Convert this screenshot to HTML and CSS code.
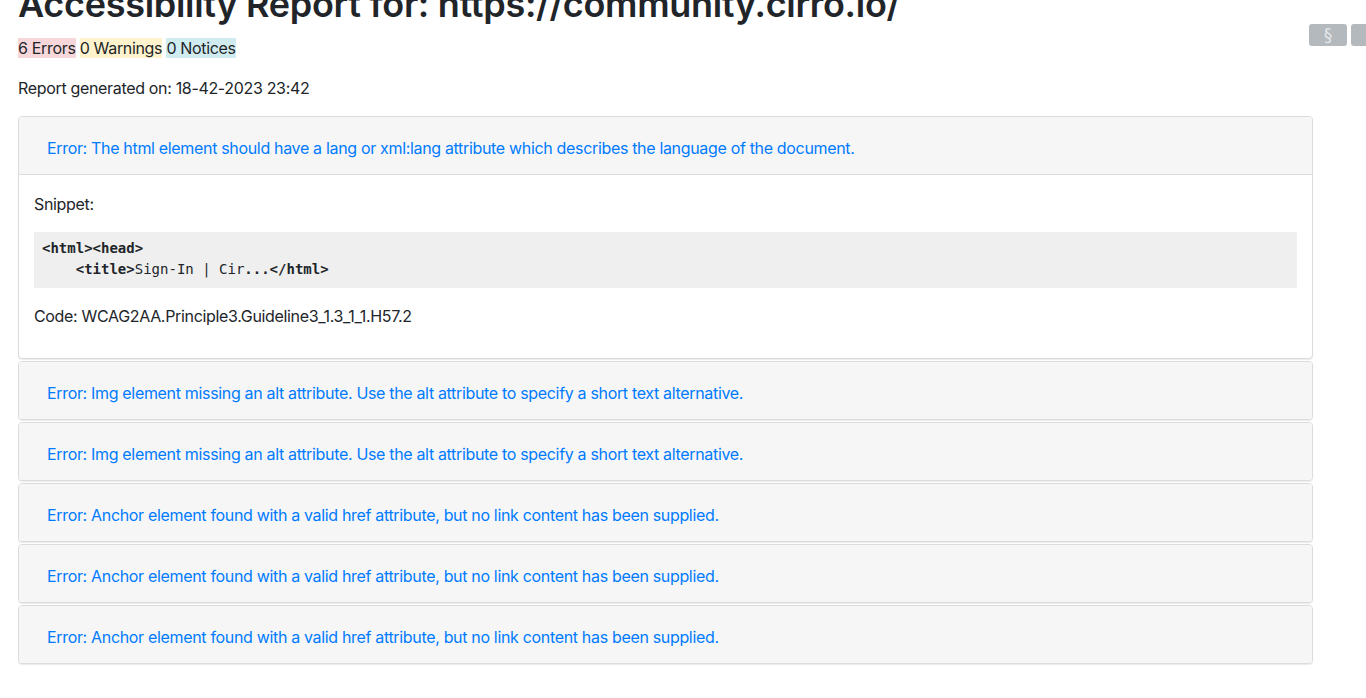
FILE: index.html
```html
<!DOCTYPE html>
<html lang="en">
<head>
<meta charset="utf-8">
<title>Accessibility Report</title>
<link rel="stylesheet" href="styles.css">
</head>
<body>
<div class="tools">
  <button class="tool-btn">§</button>
  <button class="tool-btn">‹</button>
</div>
<main class="report">
  <h1 class="title">Accessibility Report for: https://community.cirro.io/</h1>
  <p class="counts"><span class="count count-error">6 Errors</span> <span class="count count-warning">0 Warnings</span> <span class="count count-notice">0 Notices</span></p>
  <p class="generated">Report generated on: 18-42-2023 23:42</p>

  <div class="issues">
    <section class="issue open">
      <div class="issue-head"><button class="issue-link">Error: The html element should have a lang or xml:lang attribute which describes the language of the document.</button></div>
      <div class="issue-body">
        <p class="label">Snippet:</p>
        <pre class="snippet"><b>&lt;html&gt;&lt;head&gt;</b>
    <b>&lt;title&gt;</b>Sign-In | Cir<b>...&lt;/html&gt;</b></pre>
        <p class="label">Code: WCAG2AA.Principle3.Guideline3_1.3_1_1.H57.2</p>
      </div>
    </section>
    <section class="issue">
      <div class="issue-head"><button class="issue-link">Error: Img element missing an alt attribute. Use the alt attribute to specify a short text alternative.</button></div>
    </section>
    <section class="issue">
      <div class="issue-head"><button class="issue-link">Error: Img element missing an alt attribute. Use the alt attribute to specify a short text alternative.</button></div>
    </section>
    <section class="issue">
      <div class="issue-head"><button class="issue-link">Error: Anchor element found with a valid href attribute, but no link content has been supplied.</button></div>
    </section>
    <section class="issue">
      <div class="issue-head"><button class="issue-link">Error: Anchor element found with a valid href attribute, but no link content has been supplied.</button></div>
    </section>
    <section class="issue">
      <div class="issue-head"><button class="issue-link">Error: Anchor element found with a valid href attribute, but no link content has been supplied.</button></div>
    </section>
  </div>
</main>
</body>
</html>
```

FILE: styles.css
```css
* { box-sizing: border-box; }
html, body { margin: 0; padding: 0; }
body {
  font-family: Inter, "Liberation Sans", Arial, sans-serif;
  font-size: 16px;
  line-height: 1.5;
  letter-spacing: -0.33px;
  color: #212529;
  background: #fff;
  overflow: hidden;
}
.report {
  padding: 0 53px 40px 18px;
}
.title {
  margin: -20px 0 8px;
  font-size: 36px;
  line-height: 48px;
  font-weight: 600;
  letter-spacing: -0.3px;
  color: #212529;
}
.counts { margin: 0 0 16px; }
.count-error { background: #f8d7da; }
.count-warning { background: #fff3cd; }
.count-notice { background: #d1ecf1; }
.generated { margin: 0 0 16px; }

.issues { display: flex; flex-direction: column; gap: 2px; }
.issue {
  border: 1px solid #dcdcdc;
  border-radius: 4px;
  box-shadow: 0 1px 1px rgba(0,0,0,0.08);
  overflow: hidden;
  background: #fff;
}
.issue-head {
  background: #f6f6f6;
  padding: 13px 16px 8px;
}
.issue.open .issue-head { border-bottom: 1px solid #dcdcdc; }
.issue-link {
  font: inherit;
  letter-spacing: inherit;
  color: #007bff;
  background: none;
  border: 0;
  padding: 6px 12px;
  cursor: pointer;
  text-align: left;
}
.issue-body { padding: 17px 15px 14px; }
.label { margin: 0 0 16px; }
.snippet {
  margin: 0 0 16px;
  padding: 6px 8px 8px;
  background: #efefef;
  font-family: "DejaVu Sans Mono", Menlo, monospace;
  font-size: 14px;
  line-height: 21px;
  letter-spacing: 0;
  color: #212529;
}
.snippet b { font-weight: 700; }

.tools {
  position: fixed;
  top: 24px;
  left: 1309px;
  display: flex;
  gap: 4px;
}
.tool-btn {
  width: 38px;
  height: 22px;
  border: 0;
  border-radius: 3px;
  background: #b3b9bd;
  color: #e4e7e9;
  font-family: "DejaVu Sans", sans-serif;
  font-size: 17px;
  line-height: 22px;
  padding: 0;
}
```
